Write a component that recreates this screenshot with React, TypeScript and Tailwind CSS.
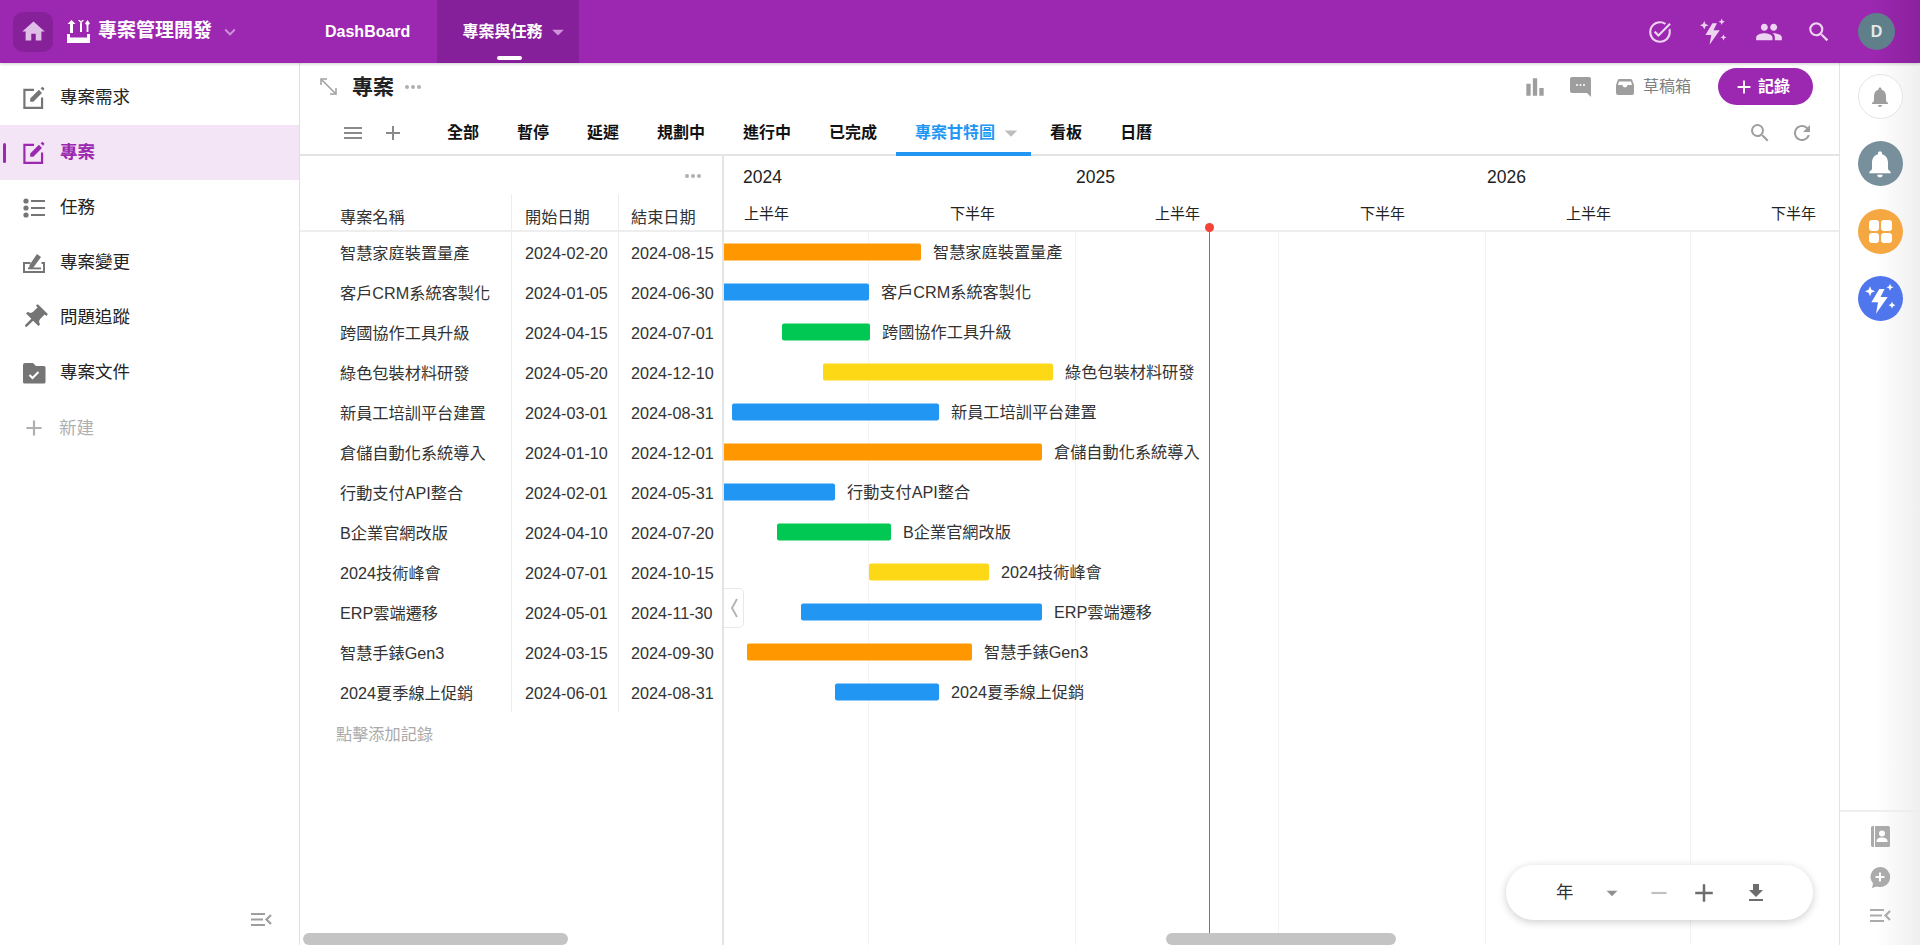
import React from "react";
import { MdHome, MdPeople, MdSearch, MdOutlineTaskAlt, MdPushPin, MdAdd, MdRefresh, MdBarChart, MdNotifications, MdFileDownload, MdRemove, MdKeyboardArrowDown, MdArrowDropDown, MdOutlineMenu } from "react-icons/md";

const Edit = ({ c = "#757575" }: { c?: string }) => (
  <svg width="24" height="24" viewBox="0 0 22 22" fill="none">
    <path d="M11 3.5H2.2V20H18.4V10.5" stroke={c} strokeWidth="2" />
    <path d="M7.5 14.5V11.5L15.5 3.5L18.3 6.4L10.4 14.5Z" fill={c} />
    <path d="M17 2L18.8 0.8L20.6 2.6L19.4 4.4Z" fill={c} />
  </svg>
);
const ListIcon = () => (
  <svg width="24" height="24" viewBox="0 0 24 24" fill="#757575">
    <circle cx="4" cy="5" r="2.6" />
    <circle cx="4" cy="12" r="2.6" />
    <circle cx="4" cy="19" r="2.6" />
    <path d="M9 4h14v2H9zM9 11h14v2H9zM9 18h14v2H9z" />
  </svg>
);
const Tray = () => (
  <svg width="24" height="24" viewBox="0 0 24 24" fill="#757575">
    <path d="M1 11h7.5v2H3v7h18v-7h-1.5v-2H23v11H1z" />
    <path d="M7 18l.5-4L15 3l4 3-8 11z" />
    <path d="M6 16.5h13v1.8H6z" />
  </svg>
);
const FolderCheck = () => (
  <svg width="24" height="24" viewBox="0 0 24 24" fill="#757575">
    <path d="M3 2h8l3 3h8a1.5 1.5 0 0 1 1.5 1.5V21a1.5 1.5 0 0 1-1.5 1.5H2.5A1.5 1.5 0 0 1 1 21V4a2 2 0 0 1 2-2z" />
    <path d="M7.5 14l3 3 6-6" stroke="#fff" strokeWidth="2" fill="none" />
  </svg>
);
const Spark = ({ c, s }: { c: string; s: number }) => (
  <svg width={s} height={s} viewBox="0 0 24 24" fill={c}>
    <path d="M11.5 4.5L5.5 14.5h5L9 23l8.8-12.5h-5.4l3-6z" />
    <path d="M4.5 2.5l1.1 2.6 2.6 1.1-2.6 1.1-1.1 2.6-1.1-2.6L.8 6.2l2.6-1.1zM19.5.5l.8 1.9 1.9.8-1.9.8-.8 1.9-.8-1.9-1.9-.8 1.9-.8zM21 14l.8 1.8 1.8.8-1.8.8-.8 1.8-.8-1.8-1.8-.8 1.8-.8z" />
  </svg>
);
const Collapse = ({ c = "#9e9e9e" }: { c?: string }) => (
  <svg width="21" height="15" viewBox="0 0 21 15" fill="none" stroke={c} strokeWidth="2.2">
    <path d="M0 2h14M0 7.5h12M0 13h14" />
    <path d="M20 3l-4.5 4.5L20 12" />
  </svg>
);
const Logo = () => (
  <svg width="23" height="23" viewBox="0 0 23 23" fill="#fff">
    <path d="M0 14h3V17.5h17V14h3v9H0zM3.5 19.5h16v1.5h-16z" />
    <path d="M3 13V4H0.5L4.5 0l4 4H6v9z" />
    <path d="M11 0l3 3.5L17 0h-1.8l-1.2 1.5L12.8 0zM13 3h2v9h-2z" />
    <path d="M18 3.5l2.5-3.5 2.5 3.5-1.6 1.5v7h-1.8V5z" />
  </svg>
);
const Expand = () => (
  <svg width="17" height="17" viewBox="0 0 17 17" fill="none" stroke="#9e9e9e" strokeWidth="1.5">
    <path d="M2 2l13 13" />
    <path d="M1 7V1h6M16 10v6h-6" />
  </svg>
);
const Comment = () => (
  <svg width="21" height="20" viewBox="0 0 21 20" fill="#9e9e9e">
    <path d="M2 0h17a2 2 0 0 1 2 2v18l-4-4H2a2 2 0 0 1-2-2V2a2 2 0 0 1 2-2z" />
    <circle cx="7" cy="8" r="1" fill="#fff" />
    <circle cx="10.5" cy="8" r="1" fill="#fff" />
    <circle cx="14" cy="8" r="1" fill="#fff" />
  </svg>
);
const InboxFilled = () => (
  <svg width="18" height="16" viewBox="0 0 18 16" fill="#9e9e9e">
    <path d="M3.5 0h11a2 2 0 0 1 1.8 1.2L18 6v8a2 2 0 0 1-2 2H2a2 2 0 0 1-2-2V6l1.7-4.8A2 2 0 0 1 3.5 0zM3 2.5L2 6h4.5a2.5 2.5 0 0 0 5 0H16l-1-3.5z" />
  </svg>
);
const Contact = () => (
  <svg width="19" height="21" viewBox="0 0 19 21">
    <path d="M1 0h16.5A1.5 1.5 0 0 1 19 1.5v18a1.5 1.5 0 0 1-1.5 1.5H1z" fill="#ababab" />
    <path d="M0 0.5h2.5V20.5H0z" fill="#ababab" />
    <path d="M3 0h1v21H3z" fill="#fff" />
    <circle cx="11" cy="7.5" r="3" fill="#fff" />
    <path d="M5.5 15c0-2.4 3-3.5 5.5-3.5s5.5 1.1 5.5 3.5v1h-11z" fill="#fff" />
  </svg>
);
const Dots = ({ className = "" }: { className?: string }) => (
  <span className={`flex gap-[2px] ${className}`}>
    <i className="w-[4px] h-[4px] rounded-full bg-[#b0b0b0]" />
    <i className="w-[4px] h-[4px] rounded-full bg-[#b0b0b0]" />
    <i className="w-[4px] h-[4px] rounded-full bg-[#b0b0b0]" />
  </span>
);

const navItems: { label: string; icon: React.ReactNode; active?: boolean }[] = [
  { label: "專案需求", icon: <Edit /> },
  { label: "專案", icon: <Edit c="#9c27b0" />, active: true },
  { label: "任務", icon: <ListIcon /> },
  { label: "專案變更", icon: <Tray /> },
  { label: "問題追蹤", icon: <MdPushPin size={30} color="#757575" className="rotate-45 shrink-0" /> },
  { label: "專案文件", icon: <FolderCheck /> },
];

const O = "#ff9800", B = "#2196f3", G = "#00c853", Y = "#fdd816";
const rows = [
  ["智慧家庭裝置量產", "2024-02-20", "2024-08-15", 0, 198, O],
  ["客戶CRM系統客製化", "2024-01-05", "2024-06-30", 0, 146, B],
  ["跨國協作工具升級", "2024-04-15", "2024-07-01", 59, 88, G],
  ["綠色包裝材料研發", "2024-05-20", "2024-12-10", 100, 230, Y],
  ["新員工培訓平台建置", "2024-03-01", "2024-08-31", 9, 207, B],
  ["倉儲自動化系統導入", "2024-01-10", "2024-12-01", 0, 319, O],
  ["行動支付API整合", "2024-02-01", "2024-05-31", 0, 112, B],
  ["B企業官網改版", "2024-04-10", "2024-07-20", 54, 114, G],
  ["2024技術峰會", "2024-07-01", "2024-10-15", 146, 120, Y],
  ["ERP雲端遷移", "2024-05-01", "2024-11-30", 78, 241, B],
  ["智慧手錶Gen3", "2024-03-15", "2024-09-30", 24, 225, O],
  ["2024夏季線上促銷", "2024-06-01", "2024-08-31", 112, 104, B],
] as [string, string, string, number, number, string][];

const tabs = ["全部", "暫停", "延遲", "規劃中", "進行中", "已完成"];

export default function App() {
  return (
    <div className="h-[945px] w-[1920px] overflow-hidden flex flex-col bg-white text-[16px] text-[#222] font-['Liberation_Sans','Noto_Sans_CJK_TC',sans-serif]">
      {/* top bar */}
      <header className="relative z-20 h-[63px] shrink-0 flex items-center bg-[linear-gradient(90deg,#9c27b0_97.5%,#8b229d_100%)] shadow-[0_1px_3px_rgba(0,0,0,0.2)]">
        <div className="ml-[13px] w-[40px] h-[40px] rounded-[10px] bg-[#86219a] flex items-center justify-center">
          <MdHome size={27} color="#e1bee7" />
        </div>
        <div className="ml-[14px]"><Logo /></div>
        <span className="ml-[8px] text-[19px] font-bold text-white">專案管理開發</span>
        <MdKeyboardArrowDown size={22} color="#ce93d8" className="ml-[7px]" />
        <span className="ml-[84px] font-bold text-white">DashBoard</span>
        <div className="relative ml-[27px] w-[142px] h-[63px] bg-[#86209a] flex items-center pl-[25px]">
          <span className="font-bold text-white">專案與任務</span>
          <MdArrowDropDown size={28} color="#ce93d8" className="ml-[2px]" />
          <i className="absolute left-[60px] top-[56px] w-[25px] h-[4px] rounded-full bg-white" />
        </div>
        <div className="ml-auto flex items-center">
          <MdOutlineTaskAlt size={26} color="#ecd4f0" />
          <span className="ml-[26px]"><Spark c="#ecd4f0" s={28} /></span>
          <MdPeople size={28} color="#ecd4f0" className="ml-[28px]" />
          <MdSearch size={26} color="#ecd4f0" className="ml-[23px]" />
          <div className="ml-[26px] mr-[25px] w-[37px] h-[37px] rounded-full bg-[#5f7f8a] flex items-center justify-center text-[16px] font-bold text-[#e4e9eb]">D</div>
        </div>
      </header>

      <div className="flex-1 min-h-0 flex">
        {/* left sidebar */}
        <aside className="w-[300px] shrink-0 border-r border-[#e0e0e0] flex flex-col pt-[7px] relative text-[17.5px]">
          {navItems.map((n) => (
            <div key={n.label} className={`relative h-[55px] flex items-center pl-[21px] ${n.active ? "bg-[#f3e5f5] text-[#9c27b0] font-bold" : "text-[#222]"}`}>
              {n.active && <i className="absolute left-[3px] top-[18px] w-[3px] h-[20px] rounded bg-[#9c27b0]" />}
              <span className="w-[26px] h-[26px] flex items-center justify-center">{n.icon}</span>
              <span className="ml-[13px]">{n.label}</span>
            </div>
          ))}
          <div className="h-[55px] pt-[1px] flex items-center pl-[21px] text-[#b0b0b0]">
            <span className="w-[26px] h-[26px] flex items-center justify-center"><MdAdd size={26} color="#b0b0b0" /></span>
            <span className="ml-[12px]">新建</span>
          </div>
          <div className="mt-auto mb-[18px] ml-[251px]"><Collapse /></div>
        </aside>

        {/* main */}
        <main className="flex-1 min-w-0 flex flex-col relative">
          <div className="h-[47px] shrink-0 flex items-center pl-[20px] pr-[26px]">
            <Expand />
            <span className="ml-[15px] text-[21px] font-bold text-[#222]">專案</span>
            <Dots className="ml-[11px]" />
            <div className="ml-auto flex items-center text-[#808080]">
              <MdBarChart size={26} color="#9e9e9e" />
              <span className="ml-[22px]"><Comment /></span>
              <span className="ml-[25px]"><InboxFilled /></span>
              <span className="ml-[9px]">草稿箱</span>
              <div className="ml-[27px] w-[95px] h-[37px] rounded-full bg-[#9c27b0] text-white font-bold flex items-center justify-center gap-[3px] pr-[8px]">
                <MdAdd size={22} color="#fff" />記錄
              </div>
            </div>
          </div>
          <div className="h-[46px] shrink-0 flex items-stretch border-b-2 border-[#e4e4e4] pl-[41px] pr-[25px] pt-[2px]">
            <div className="flex items-center">
              <MdOutlineMenu size={24} color="#8a8a8a" />
              <MdAdd size={24} color="#8a8a8a" className="ml-[16px]" />
            </div>
            <div className="ml-[23px] flex items-stretch font-bold text-[#111]">
              {tabs.map((t) => (
                <div key={t} className="px-[19px] flex items-center">{t}</div>
              ))}
              <div className="relative pl-[19px] pr-[5px] flex items-center text-[#2196f3]">
                專案甘特圖
                <MdArrowDropDown size={30} color="#bdbdbd" className="ml-[1px]" />
                <i className="absolute left-0 right-0 -bottom-[2px] h-[4px] bg-[#2196f3]" />
              </div>
              <div className="px-[19px] flex items-center">看板</div>
              <div className="px-[19px] flex items-center">日曆</div>
            </div>
            <div className="ml-auto flex items-center gap-[18px]">
              <MdSearch size={24} color="#9e9e9e" />
              <MdRefresh size={24} color="#9e9e9e" />
            </div>
          </div>

          <div className="flex-1 min-h-0 flex relative">
            {/* table */}
            <section className="w-[424px] shrink-0 border-r-2 border-[#e4e4e4] relative text-[16.2px]">
              <div className="h-[76px] border-b-2 border-[#eeeeee] relative">
                <Dots className="absolute right-[21px] top-[18px]" />
                <div className="absolute left-0 right-0 bottom-0 h-[36px] flex text-[#333]">
                  <div className="w-[212px] h-full pl-[40px] pt-[10px] flex items-center border-r border-[#eeeeee]">專案名稱</div>
                  <div className="w-[107px] h-full pl-[13px] pt-[10px] flex items-center border-r border-[#eeeeee]">開始日期</div>
                  <div className="pl-[12px] pt-[10px] flex items-center">結束日期</div>
                </div>
              </div>
              {rows.map((r) => (
                <div key={r[0]} className="h-[40px] flex items-center text-[#333]">
                  <div className="w-[212px] h-full pl-[40px] pt-[3px] flex items-center border-r border-[#eeeeee] whitespace-nowrap">{r[0]}</div>
                  <div className="w-[107px] h-full pl-[13px] pt-[3px] flex items-center border-r border-[#eeeeee]">{r[1]}</div>
                  <div className="pl-[12px] pt-[3px] flex items-center">{r[2]}</div>
                </div>
              ))}
              <div className="h-[40px] pl-[36px] pt-[4px] flex items-center text-[#aaaaaa]">點擊添加記錄</div>
              <div className="absolute left-[3px] top-[777px] w-[265px] h-[12px] rounded-full bg-[#c4c4c4]" />
            </section>

            {/* gantt */}
            <section className="flex-1 min-w-0 relative overflow-hidden">
              <div className="h-[76px] border-b-2 border-[#eeeeee] relative text-[#222]">
                <span className="absolute left-[19px] top-[8px] text-[17.5px]">2024</span>
                <span className="absolute left-[352px] top-[8px] text-[17.5px]">2025</span>
                <span className="absolute left-[763px] top-[8px] text-[17.5px]">2026</span>
                {[{ l: "上半年", x: 20 }, { l: "下半年", x: 226 }, { l: "上半年", x: 431 }, { l: "下半年", x: 636 }, { l: "上半年", x: 842 }, { l: "下半年", x: 1047 }].map((h) => (
                  <span key={h.x} className="absolute top-[47px] text-[15px]" style={{ left: h.x }}>{h.l}</span>
                ))}
              </div>
              {[144, 351, 554, 761, 966].map((x) => (
                <i key={x} className="absolute top-[76px] bottom-0 w-px bg-[#f3f3f3]" style={{ left: x }} />
              ))}
              <div className="relative -ml-[1px] text-[16.2px]">
                {rows.map((r) => (
                  <div key={r[0]} className="h-[40px] flex items-center" style={{ paddingLeft: r[3] }}>
                    <i className="h-[17px] rounded-[2px] shrink-0 -translate-y-[0.5px]" style={{ width: r[4], background: r[5] }} />
                    <span className="ml-[12px] text-[#333] whitespace-nowrap">{r[0]}</span>
                  </div>
                ))}
              </div>
              <i className="absolute left-[485px] top-[71px] bottom-0 w-px bg-[#f44336]" />
              <i className="absolute left-[481px] top-[67px] w-[9px] h-[9px] rounded-full bg-[#f44336]" />
              <div className="absolute left-[442px] top-[777px] w-[230px] h-[12px] rounded-full bg-[#c4c4c4]" />
              <div className="absolute left-0 top-[432px] w-[20px] h-[40px] bg-white border border-l-0 border-[#e8e8e8] rounded-r-[5px] flex items-center justify-center">
                <svg width="8" height="20" viewBox="0 0 8 20" fill="none" stroke="#b5b5b5" strokeWidth="2"><path d="M7 1L2 10l5 9" /></svg>
              </div>
              <div className="absolute left-[782px] top-[709px] w-[307px] h-[55px] rounded-full bg-white shadow-[0_2px_8px_rgba(0,0,0,0.2)] flex items-center">
                <span className="ml-[50px] text-[17.5px] text-[#333]">年</span>
                <MdArrowDropDown size={26} color="#8f8f8f" className="ml-[25px]" />
                <MdRemove size={26} color="#c0c0c0" className="ml-[21px]" />
                <MdAdd size={30} color="#6e6e6e" className="ml-[17px]" />
                <MdFileDownload size={24} color="#6e6e6e" className="ml-[25px]" />
              </div>
            </section>
          </div>
        </main>

        {/* right rail */}
        <aside className="w-[81px] shrink-0 border-l border-[#e4e4e4] bg-[linear-gradient(90deg,#ffffff_45%,#efefef_100%)] flex flex-col items-center pt-[11px]">
          <div className="w-[45px] h-[45px] rounded-full bg-white border border-[#e5e5e5] flex items-center justify-center">
            <MdNotifications size={24} color="#9e9e9e" />
          </div>
          <div className="mt-[22px] w-[45px] h-[45px] rounded-full bg-[#78909c] flex items-center justify-center">
            <MdNotifications size={32} color="#fff" />
          </div>
          <div className="mt-[23px] w-[45px] h-[45px] rounded-full bg-[#f5a742] grid grid-cols-2 gap-[2px] p-[11px]">
            <i className="rounded-[3px] bg-white" /><i className="rounded-[3px] bg-white" />
            <i className="rounded-[3px] bg-white" /><i className="rounded-[3px] bg-white" />
          </div>
          <div className="mt-[22px] w-[45px] h-[45px] rounded-full bg-[#5076ee] flex items-center justify-center">
            <Spark c="#fff" s={32} />
          </div>
          <div className="mt-auto w-full border-t-2 border-[#eeeeee] flex flex-col items-center pt-[14px] pb-[22px]">
            <Contact />
            <svg width="22" height="22" viewBox="0 0 22 22" className="mt-[19px]">
              <path d="M11 1a10 10 0 1 1-3 19.5L3 22l1-4.5A10 10 0 0 1 11 1z" fill="#ababab" />
              <path d="M11 6.5v9M6.5 11h9" stroke="#fff" strokeWidth="2" />
            </svg>
            <span className="mt-[20px] flex"><Collapse c="#ababab" /></span>
          </div>
        </aside>
      </div>
    </div>
  );
}
